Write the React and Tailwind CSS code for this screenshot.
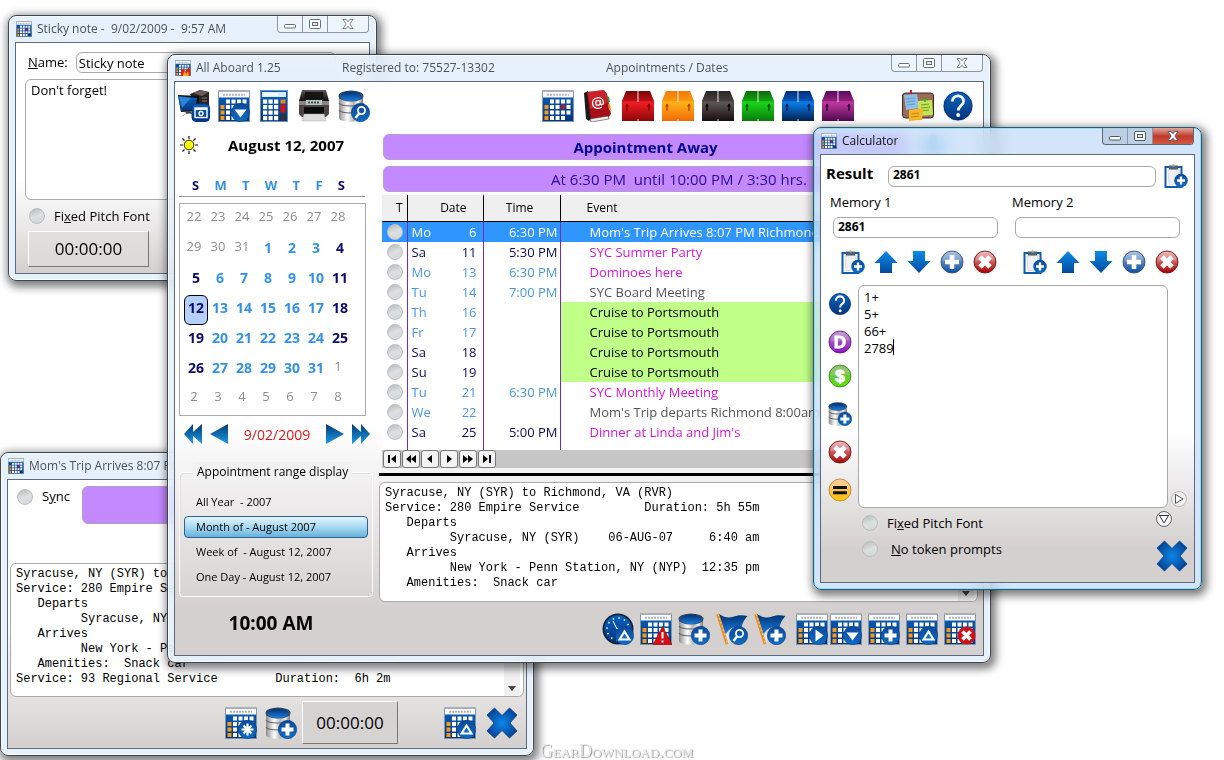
import React from "react";

const cx = (...parts) => parts.filter(Boolean).join(" ");

/* ---------- shared gradients for the icon drawings ---------- */

const GRADS = [
  ["gBlue", "#0a63c0", "#03357c"],
  ["gBadge", "#0a4a9c", "#0f6cc4"],
  ["gDeep", "#003070", "#1b7fe0"],
  ["gArrow", "#0b8ae8", "#034a9e"],
  ["gNav", "#033a70", "#1d9bea"],
  ["gMetalDark", "#5a5a5a", "#0c0c0c"],
  ["gRed", "#e8b0b0", "#a80000"],
  ["gSteel", "#9fb6dc", "#0b4fa0"],
  ["gPurple", "#b08cc8", "#8a12b8"],
  ["gGreen", "#7fae62", "#5ae010"],
  ["gOrange", "#ffc08a", "#ffc400"],
];

function SharedDefs() {
  return (
    <svg width="0" height="0" className="absolute" aria-hidden="true">
      <defs>
        {GRADS.map(([id, a, b]) => (
          <linearGradient key={id} id={id} x1="0" y1="0" x2="0" y2="1">
            <stop offset="0" stopColor={a} />
            <stop offset="1" stopColor={b} />
          </linearGradient>
        ))}
        <linearGradient id="gMetal" x1="0" y1="0" x2="1" y2="0">
          <stop offset="0" stopColor="#8d8d8d" />
          <stop offset="0.35" stopColor="#ffffff" />
          <stop offset="0.6" stopColor="#b8b8b8" />
          <stop offset="0.8" stopColor="#f2f2f2" />
          <stop offset="1" stopColor="#777777" />
        </linearGradient>
        <radialGradient id="gCross">
          <stop offset="0" stopColor="#0c86ea" />
          <stop offset="1" stopColor="#07499a" />
        </radialGradient>
      </defs>
    </svg>
  );
}

const Svg = ({ box = 32, size = "size-8", children }) => (
  <svg viewBox={`0 0 ${box} ${box}`} className={cx("block shrink-0", size)} aria-hidden="true">
    {children}
  </svg>
);

/* ---------- badge glyphs, centred on 0,0 ---------- */

const GLYPHS = {
  plus: <path d="M-2-6h4v4h4v4h-4v4h-4v-4h-4v-4h4z" fill="#fff" />,
  down: <path d="M-6-3H6L0 5z" fill="#fff" />,
  right: <path d="M-3-6 5 0-3 6z" fill="#fff" />,
  up: <path d="M-5 4 0-4 5 4z" fill="#1a6fc4" stroke="#fff" strokeWidth="2" />,
  find: (
    <g fill="none" stroke="#fff">
      <circle cx="1" cy="-2" r="3.6" strokeWidth="1.8" />
      <path d="M-1.5 1-5 5.500" strokeWidth="2.4" />
    </g>
  ),
  star: <path d="M0-6V6M-6 0H6M-4-4 4 4M4-4-4 4" stroke="#fff" strokeWidth="2.200" />,
};

const Badge = ({ glyph, x = 22.5, y = 22.5 }) => (
  <g transform={`translate(${x} ${y})`}>
    <circle r="9.200" fill="url(#gBadge)" stroke="#0a3c7c" strokeWidth="0.600" />
    {GLYPHS[glyph]}
  </g>
);

const CELL_X = [2.5, 8, 13.5, 19, 24.5];
const CELL_Y = [9.5, 15, 20.5, 26];

function CalendarIcon({ badge, today, flame, size }) {
  return (
    <Svg size={size}>
      <rect x="0.500" y="0.500" width="31" height="31" fill="url(#gBlue)" stroke="#7f95ae" />
      <rect x="1" y="1" width="30" height="6.500" fill="#fafafa" />
      <path d="M0 1h32" stroke="#a9b0b8" strokeWidth="2" />
      <path d="M5 4.700h22" stroke="#b4b4b4" strokeWidth="2" strokeDasharray="2 1" />
      {CELL_Y.map((y, r) =>
        CELL_X.map((x, c) => {
          if (r === 0 && c === 0) return null;
          if (today && r === 3 && c === 4) return null;
          const fill =
            c === 0 ? "#f49a18" : today && r === 1 && c === 3 ? "#d01020" : "#ffffff";
          return <rect key={`${r}-${c}`} x={x} y={y} width="4" height="4" fill={fill} />;
        })
      )}
      {flame && (
        <g>
          <path d="M12 32c-2-7 2-10 4-16 3 3 3 5 4 8 3-4 5-7 8-10 2 6 4 11 2 18z" fill="#d8260c" />
          <path d="M16 32c0-5 2-7 3-9 2 2 3 3 4 5l3-5c2 4 2 6 1 9z" fill="#ffa51c" />
        </g>
      )}
      {badge === "alert" && (
        <g>
          <path d="M22.500 13.500 32 31.500H13z" fill="#d40e14" stroke="#a00" strokeWidth="0.600" />
          <path d="M22.500 19v6.500M22.500 27.500v2" stroke="#fff" strokeWidth="2" />
        </g>
      )}
      {badge === "remove" && (
        <g transform="translate(22.500 22.500)">
          <circle r="9" fill="#d01018" />
          <path d="M-4-4 4 4M4-4-4 4" stroke="#fff" strokeWidth="3.800" />
        </g>
      )}
      {badge && GLYPHS[badge] && <Badge glyph={badge} />}
    </Svg>
  );
}

const CalcIcon = () => (
  <Svg>
    <rect x="2.500" y="0.500" width="27" height="31" fill="url(#gBlue)" stroke="#6f8fb5" />
    <rect x="4" y="2" width="24" height="5" fill="#d9ebfa" />
    <path d="M6 4.500h14" stroke="#fff" strokeWidth="2" />
    {CELL_Y.map((y) =>
      [5, 10.5, 16].map((x) => (
        <rect key={`${x}-${y}`} x={x} y={y} width="4.200" height="4.200" fill="#fff" />
      ))
    )}
    <rect x="22.500" y="9.500" width="5" height="4" fill="#e78a1c" />
    <rect x="22.500" y="14.500" width="5" height="8" fill="#d31212" />
    <rect x="22.500" y="24" width="5" height="6" fill="#333" />
  </Svg>
);

const DatabaseIcon = ({ badge, size }) => (
  <Svg size={size}>
    <path d="M1 6v22c0 5 24 5 24 0V6z" fill="url(#gMetal)" />
    <path d="M1 13c2 4 22 4 24 0M1 20c2 4 22 4 24 0" fill="none" stroke="#666" strokeWidth="1.200" />
    <ellipse cx="13" cy="6" rx="12.500" ry="5.600" fill="#3c4654" />
    <ellipse cx="13" cy="6.300" rx="11.200" ry="4.800" fill="url(#gDeep)" />
    <Badge glyph={badge} />
  </Svg>
);

const ComputerIcon = () => (
  <Svg>
    <path d="M12 4 22 0l9 2v18l-9 4z" fill="#2b2322" />
    <path d="m22 0 9 2-7 4-9-3z" fill="#6c5a55" />
    <path d="M24 8h5M24 11h5" stroke="#8a7a76" />
    <path d="m0 5 21 1v15L3 22z" fill="#111" />
    <path d="m0 6 19 2-2 12-14 1z" fill="url(#gBlue)" />
    <path d="m1 7 12 1L4 18z" fill="#45a5f0" opacity="0.600" />
    <path d="M3 27c4-4 8-4 12-3l-3-3H7l1 3z" fill="#444" />
    <rect x="14" y="14" width="17.500" height="17.500" rx="4" fill="url(#gBlue)" stroke="#063a80" />
    <rect x="17" y="18" width="12" height="9.500" fill="none" stroke="#fff" strokeWidth="1.400" />
    <path d="M17 19h12" stroke="#fff" strokeWidth="2" />
    <circle cx="23" cy="23.500" r="2" fill="none" stroke="#fff" strokeWidth="1.400" />
  </Svg>
);

const PrinterIcon = () => (
  <Svg>
    <path d="M4 0h24l3 11H1z" fill="url(#gMetalDark)" />
    <path d="M7 2h18l1 8H6z" fill="#151515" />
    <path d="M1 11h30v13l-3 3H4l-3-3z" fill="#4a4340" />
    <path d="M1 11h30v4H1z" fill="#8c8683" />
    <path d="M8 10h16v5H8z" fill="#b9c4c0" />
    <path d="M10 12.500h12" stroke="#3a5a50" strokeWidth="2" strokeDasharray="2 1" />
    <path d="M6 17h20v7H6z" fill="#0b0b0b" />
    <path d="M6 24h20l2 7H4z" fill="#dedede" stroke="#aaa" strokeWidth="0.500" />
  </Svg>
);

const AddressBookIcon = () => (
  <Svg>
    <path d="M2 3 6 1l5 26-4 4-3-2z" fill="#1b1b1b" />
    <path d="m5 2 17-2 3 4 4 20-3 4-17 2z" fill="#a80e18" />
    <path d="M6 2 22 0l3 5 1 8-18 6z" fill="#e8323a" opacity="0.550" />
    <path d="m8 29 18-3 1 3-18 3z" fill="#eee" stroke="#444" strokeWidth="0.600" />
    <path d="m25 6 2 1 1 5-2 0z" fill="#2c9a2c" />
    <path d="m26 14 2 0 1 6-2 0z" fill="#f09020" />
    <g fill="none" stroke="#fff" strokeWidth="1.300" transform="rotate(-8 16 13)">
      <circle cx="16" cy="13" r="2.300" />
      <path d="M18.500 10.500v3.500c0 2 3 1.500 3-1 0-7-11-7-11 0 0 5 5 6.500 8.500 4.500" />
    </g>
  </Svg>
);

const CRATES = [
  ["red", "#7a0505", "#f01c22", "#8a0808", "#7a0000"],
  ["orange", "#f47a08", "#ffb018", "#f06a08", "#c03c00"],
  ["black", "#2b2626", "#5c5454", "#180c0e", "#000000"],
  ["green", "#0d6a0a", "#18d418", "#0a7a0c", "#064806"],
  ["blue", "#022f78", "#0a7ae6", "#04204e", "#001a4a"],
  ["purple", "#5c0a5c", "#c0369e", "#4e0a4e", "#2a0030"],
];

const CrateIcon = ({ name, top, mid, low, mark }) => (
  <Svg>
    <defs>
      <linearGradient id={`crate-${name}`} x1="0" y1="0" x2="0" y2="1">
        <stop offset="0" stopColor={top} />
        <stop offset="0.400" stopColor={mid} />
        <stop offset="1" stopColor={low} />
      </linearGradient>
    </defs>
    <path d="M4 1h24l4 10v20H0V11z" fill={`url(#crate-${name})`} />
    <path d="M4 1h24l4 10H0z" fill={top} opacity="0.350" />
    <path d="M16 1v11M16 29v2.500" stroke="#eee" strokeWidth="1.200" opacity="0.800" />
    <path d="M5 14v7M27 14v7" stroke={mark} strokeWidth="1.300" />
    <path d="M3 16.500 5 13.500l2 3zM25 16.500 27 13.500l2 3z" fill={mark} />
  </Svg>
);

const NotesIcon = () => (
  <Svg>
    <rect x="0.500" y="3" width="31" height="25" rx="3" fill="#9b6a58" stroke="#3a2a24" />
    <path d="m2 5 13-1 2 14-13 2z" fill="#8fbfe8" />
    <path d="m4 9 9-1M4 12l9-1M5 15l8-1" stroke="#5b8fc0" strokeWidth="0.800" />
    <path d="m16 11 14-1 1 15-15 1z" fill="#c3e45a" />
    <path d="m19 15 8-1M19 18l9-1M19 21l8-1" stroke="#5f8c10" strokeWidth="0.800" />
    <path d="m7 20 14-2-1 12-13 1z" fill="#f6b62c" />
    <path d="m9 24 8-1M9 27l8-1" stroke="#b87a08" strokeWidth="0.800" />
    <path d="M9 0v4" stroke="#d0182a" strokeWidth="2" />
    <path d="M23 7v5M21 9h4" stroke="#4aa81c" strokeWidth="1.600" />
  </Svg>
);

const HelpIcon = ({ size }) => (
  <Svg size={size}>
    <circle cx="16" cy="16" r="15.200" fill="#cfe0f2" />
    <circle cx="16" cy="16" r="14" fill="url(#gBlue)" stroke="#052c68" />
    <path
      d="M10.500 11.500c0-7.500 11-7.500 11 0 0 4.500-5.300 4.300-5.300 9"
      fill="none"
      stroke="#fff"
      strokeWidth="2.800"
    />
    <circle cx="16.200" cy="25" r="2" fill="#fff" />
  </Svg>
);

const ClockIcon = () => (
  <Svg>
    <circle cx="16" cy="16" r="15.500" fill="#0f2238" />
    <circle cx="16" cy="16" r="13.800" fill="url(#gBlue)" />
    <circle cx="16" cy="16" r="11" fill="none" stroke="#fff" strokeWidth="1.600" strokeDasharray="1.400 4.360" />
    <path d="m11 8 4 8h7" fill="none" stroke="#fff" strokeWidth="1" />
    <Badge glyph="up" />
  </Svg>
);

const FlagIcon = ({ badge }) => (
  <Svg>
    <path d="M3 1c6 4 10 4 15 2.500C23 2 27 2 31.500 3 28 7 26.500 10 25.500 14c-6-1-11 0-16 7z" fill="url(#gDeep)" />
    <path d="M10 22c3-5 7-7 12-7l-6 6-4 9z" fill="#e4edf8" opacity="0.900" />
    <path d="m1.500 1 9.500 30" stroke="#e88a18" strokeWidth="2.600" />
    <path d="m2 1 9.500 30" stroke="#ffd890" strokeWidth="0.900" strokeDasharray="2 2" />
    <Badge glyph={badge} />
  </Svg>
);

const CrossIcon = () => (
  <Svg>
    <path
      d="M8.500 1l7.500 7.500L23.500 1l7.500 7-7 8 7 8-7.500 7-7.500-7.500L8.500 31 1 24l7-8-7-8z"
      fill="url(#gCross)"
      stroke="#083c80"
      strokeWidth="0.800"
    />
  </Svg>
);

const SunIcon = () => (
  <Svg box={18} size="size-[18px]">
    <path
      d="M9 0v3M9 15v3M0 9h3M15 9h3M2.500 2.500l2 2M13.500 13.500l2 2M15.500 2.500l-2 2M4.500 13.500l-2 2"
      stroke="#111"
      strokeWidth="1.200"
    />
    <circle cx="9" cy="9" r="4.800" fill="#ffff10" stroke="#332a00" />
  </Svg>
);

const ClipboardIcon = () => (
  <Svg box={24} size="size-6">
    <rect x="1.500" y="3" width="16" height="20" fill="#fff" stroke="#0f5cac" strokeWidth="2" />
    <path d="m4 6 11-1v14L5 21z" fill="#eef0f3" stroke="#c8ccd2" strokeWidth="0.600" />
    <rect x="5" y="1.500" width="9" height="4" fill="#53616f" />
    <circle cx="9.500" cy="1.500" r="1.300" fill="#9aa" />
    <circle cx="17" cy="16.500" r="6.800" fill="url(#gBadge)" />
    <path d="M17 12.500v8M13 16.500h8" stroke="#fff" strokeWidth="2.400" />
  </Svg>
);

const ArrowIcon = ({ down }) => (
  <Svg box={24} size="size-6">
    <path
      d={down ? "M6 1h12v10h5.500L12 23 .5 11H6z" : "M6 23h12V13h5.500L12 1 .5 13H6z"}
      fill="url(#gArrow)"
    />
  </Svg>
);

const RoundIcon = ({ fill, edge, glyph }) => (
  <Svg box={24} size="size-6">
    <circle cx="12" cy="12" r="11" fill={`url(#${fill})`} stroke={edge} strokeWidth="0.900" />
    <path d="M2.500 11a9.500 9.500 0 0 1 19 0c-5-2-13 1-19 0z" fill="#fff" opacity="0.180" />
    {glyph === "plus" && <path d="M12 5v14M5 12h14" stroke="#fff" strokeWidth="4.600" />}
    {glyph === "cross" && <path d="m7 7 10 10M17 7 7 17" stroke="#fff" strokeWidth="5" />}
    {glyph === "equals" && <path d="M5 9.500h14M5 14.800h14" stroke="#111" strokeWidth="3" />}
    {glyph.length === 1 && (
      <text
        x="12"
        y="18"
        textAnchor="middle"
        fontFamily="Liberation Sans, sans-serif"
        fontWeight="700"
        fontSize="17"
        stroke="#fff"
        strokeWidth="0.800"
        fill="#fff"
      >
        {glyph}
      </text>
    )}
  </Svg>
);

/* ---------- small controls ---------- */

const IconButton = ({ label, children }) => (
  <button type="button" aria-label={label} className="block shrink-0">
    {children}
  </button>
);

const Orb = (props) => (
  <input
    type="checkbox"
    className="block size-4 shrink-0 appearance-none rounded-full border border-[#bcbfbf] bg-linear-160 from-[#b4b8b8] via-[#dde0e0] to-[#d2d5d5]"
    {...props}
  />
);

const CaptionButtons = ({ active }) => {
  const stroke = active ? "#4d5a6c" : "#66707c";
  return (
    <div
      className={cx(
        "mr-[7px] flex h-[17px] self-start overflow-hidden rounded-b border border-t-0",
        active ? "border-[#5b6878] bg-[#b3c6dc]/70" : "border-[#8c96a4] bg-white/20"
      )}
    >
      <button type="button" aria-label="Minimize" className="flex w-[25px] items-center justify-center border-r border-[#8c96a4]">
        <svg viewBox="0 0 12 10" className="h-[10px] w-3" aria-hidden="true">
          <rect x="0.500" y="5.500" width="11" height="3.500" rx="1" fill="#fff" stroke={stroke} />
        </svg>
      </button>
      <button type="button" aria-label="Maximize" className="flex w-[25px] items-center justify-center border-r border-[#8c96a4]">
        <svg viewBox="0 0 12 10" className="h-[10px] w-3" aria-hidden="true">
          <rect x="0.500" y="0.500" width="11" height="9" rx="1" fill="#fff" stroke={stroke} />
          <rect x="3.500" y="3.500" width="5" height="3" fill="#dfe8f2" stroke={stroke} />
        </svg>
      </button>
      <button
        type="button"
        aria-label="Close"
        className={cx(
          "flex w-10 items-center justify-center",
          active && "bg-linear-to-b from-[#dba79f] via-[#c0392b] to-[#d4583f]"
        )}
      >
        <svg viewBox="0 0 12 10" className="h-[10px] w-3" aria-hidden="true">
          <path
            d="M1 .5h3.200L6 2.800 7.800.5H11L7.800 5 11 9.500H7.800L6 7.200 4.200 9.500H1L4.200 5z"
            fill="#fff"
            stroke={stroke}
            strokeWidth="0.900"
          />
        </svg>
      </button>
    </div>
  );
};

function Window({ place, title, label, active, flame, body, children }) {
  return (
    <section
      aria-label={label}
      className={cx(
        "absolute flex flex-col rounded-lg border shadow-[2px_3px_9px_3px_rgba(0,0,0,0.5)] backdrop-blur-sm",
        active
          ? "border-[#1f5f78] bg-[#c3dcf8]/75 inset-ring inset-ring-[#7fd8ee]/70"
          : "border-[#3d4652] bg-[#e3eefb]/85 inset-ring inset-ring-white/70",
        place
      )}
    >
      <header
        className={cx(
          "flex h-[26px] shrink-0 items-center pl-[7px] text-[12px]",
          active ? "text-[#111]" : "text-[#4c5258]"
        )}
      >
        <CalendarIcon today={!flame} flame={flame} size="size-4" />
        <div className="min-w-0 grow overflow-hidden pl-[5px] whitespace-pre">{title}</div>
        <CaptionButtons active={active} />
      </header>
      <div
        className={cx(
          "mx-[6px] mb-[6px] min-h-0 grow border border-[#5c6a7c] bg-linear-to-b from-white to-[#d4d0d0]",
          body
        )}
      >
        {children}
      </div>
    </section>
  );
}

const BOX = "block rounded-md border border-[#a9a9a9] bg-white text-black outline-none resize-none";
const MONO = "font-['Liberation_Mono',monospace] text-[12px] leading-[15px] whitespace-pre overflow-hidden";

const TRIP = `Syracuse, NY (SYR) to Richmond, VA (RVR)
Service: 280 Empire Service         Duration: 5h 55m
   Departs
         Syracuse, NY (SYR)    06-AUG-07     6:40 am
   Arrives
         New York - Penn Station, NY (NYP)  12:35 pm
   Amenities:  Snack car`;

const TRIP_LONG = `${TRIP}
Service: 93 Regional Service        Duration:  6h 2m`;

const ScrollStrip = () => (
  <div className="absolute top-px right-1 bottom-px flex w-4 items-end justify-center bg-[#f1f1f1] pb-[5px]">
    <svg viewBox="0 0 8 5" className="h-[5px] w-2" aria-hidden="true">
      <path d="M0 0h8L4 5z" fill="#444" />
    </svg>
  </div>
);

/* ---------- windows ---------- */

function StickyNote() {
  return (
    <Window
      place="left-[8px] top-[15px] w-[369px] h-[266px]"
      label="Sticky note"
      title="Sticky note -  9/02/2009 -  9:57 AM"
      body="from-60% px-[9px] pt-[9px]"
    >
      <div className="flex items-center gap-2 pl-[3px]">
        <label htmlFor="note-name" className="text-[13px]">
          <u>N</u>ame:
        </label>
        <input
          id="note-name"
          defaultValue="Sticky note"
          className={cx(BOX, "h-[21px] w-[260px] px-[2px] text-[13px]")}
        />
      </div>
      <textarea
        aria-label="Note text"
        defaultValue="Don't forget!"
        className={cx(BOX, "mt-[6px] h-[121px] w-full px-[5px] py-px text-[13px] leading-[18px]")}
      />
      <label className="mt-[7px] flex items-center gap-[9px] pl-1 text-[13px] leading-[18px]">
        <Orb />
        <span>
          Fi<u>x</u>ed Pitch Font
        </span>
      </label>
      <button
        type="button"
        className="mt-[6px] ml-[3px] h-9 w-[121px] border border-t-white border-l-white border-r-[#777] border-b-[#777] bg-[#dedbdb]/70 text-[17px]"
      >
        00:00:00
      </button>
    </Window>
  );
}

function TripWindow() {
  return (
    <Window
      place="left-0 top-[452px] w-[534px] h-[304px]"
      label="Trip details"
      title="Mom's Trip Arrives 8:07 PM"
      body="from-50% flex flex-col px-[2px] pt-[6px]"
    >
      <div className="flex items-start">
        <label className="flex w-[72px] shrink-0 items-center gap-[9px] pt-px pl-[7px] text-[13px]">
          <Orb />
          <span>
            S<u>y</u>nc
          </span>
        </label>
        <div className="h-[38px] w-[400px] rounded-md border border-[#b0a0c8] bg-[#c488ff]" />
      </div>
      <div className="relative mt-[39px]">
        <textarea
          aria-label="Trip text"
          defaultValue={TRIP_LONG}
          className={cx(BOX, MONO, "h-[134px] w-full px-[5px] py-[3px]")}
        />
        <ScrollStrip />
      </div>
      <div className="flex h-[52px] items-center pr-[6px] pl-[215px]">
        <IconButton label="New appointment">
          <CalendarIcon badge="star" />
        </IconButton>
        <div className="ml-2">
          <IconButton label="Save record">
            <DatabaseIcon badge="plus" />
          </IconButton>
        </div>
        <button
          type="button"
          className="ml-[5px] h-[43px] w-[96px] border border-t-white border-l-white border-r-[#777] border-b-[#777] bg-[#d6d3d3] text-[17px]"
        >
          00:00:00
        </button>
        <div className="ml-auto flex gap-[10px]">
          <IconButton label="Update appointment">
            <CalendarIcon badge="up" />
          </IconButton>
          <IconButton label="Close trip">
            <CrossIcon />
          </IconButton>
        </div>
      </div>
    </Window>
  );
}

const WEEKS = [
  [22, 23, 24, 25, 26, 27, 28],
  [29, 30, 31, 1, 2, 3, 4],
  [5, 6, 7, 8, 9, 10, 11],
  [12, 13, 14, 15, 16, 17, 18],
  [19, 20, 21, 22, 23, 24, 25],
  [26, 27, 28, 29, 30, 31, 1],
  [2, 3, 4, 5, 6, 7, 8],
];

const isOutside = (row, day) => (row <= 1 && day > 20) || (row >= 5 && day < 10);

const NavArrow = ({ label, double, right }) => (
  <IconButton label={label}>
    <svg viewBox="0 0 18 20" className={cx("h-5 w-[18px]", right && "-scale-x-100")} aria-hidden="true">
      {double ? (
        <path d="M9 0v8l9-8v20l-9-8v8L0 10z" fill="url(#gNav)" />
      ) : (
        <path d="M18 0v20L0 10z" fill="url(#gNav)" />
      )}
    </svg>
  </IconButton>
);

function MonthPanel() {
  const range = [
    "All Year  - 2007",
    "Month of - August 2007",
    "Week of  - August 12, 2007",
    "One Day - August 12, 2007",
  ];
  return (
    <div className="flex w-[198px] shrink-0 flex-col pl-1">
      <div className="flex h-[22px] items-center pl-px">
        <SunIcon />
        <h2 className="ml-[30px] text-[15px] font-bold whitespace-nowrap">August 12, 2007</h2>
      </div>
      <div className="mt-5 mr-2 flex h-[21px] items-center justify-between border-b border-[#999] pr-5 pl-[13px] text-[13px] font-bold">
        {["S", "M", "T", "W", "T", "F", "S"].map((d, i) => (
          <span key={i} className={i % 6 === 0 ? "text-[#0a0a6e]" : "text-[#3392e8]"}>
            {d}
          </span>
        ))}
      </div>
      <div className="mt-[6px] mr-[7px] flex flex-col border border-[#aaa] pt-px pl-1">
        {WEEKS.map((week, row) => (
          <div key={row} className="flex">
            {week.map((day, col) => {
              const out = isOutside(row, day);
              const chosen = row === 3 && col === 0;
              return (
                <button
                  key={col}
                  type="button"
                  className={cx(
                    "flex h-[30px] w-6 items-center justify-center pb-[6px]",
                    out ? "pr-1 text-[13px] text-[#8e8e8e]" : "text-[14px] font-bold",
                    !out && (col % 6 === 0 ? "text-[#0a0a6e]" : "text-[#3392e8]"),
                    chosen && "rounded-md border border-black bg-[#b5d0fb]"
                  )}
                >
                  {day}
                </button>
              );
            })}
          </div>
        ))}
      </div>
      <div className="mt-2 flex h-5 items-center justify-between pr-[3px] pl-[5px]">
        <div className="flex gap-2">
          <NavArrow label="Previous year" double />
          <NavArrow label="Previous month" />
        </div>
        <span className="text-[14px] text-[#dd1a1a]">9/02/2009</span>
        <div className="flex gap-2">
          <NavArrow label="Next month" right />
          <NavArrow label="Next year" double right />
        </div>
      </div>
      <fieldset className="mt-[18px] rounded border border-white/90 px-1 pb-2 shadow-[inset_1px_1px_0_#ddd]">
        <legend className="ml-[9px] bg-[#f1f1f1] px-1 text-[12px] leading-5 whitespace-nowrap">
          Appointment range display
        </legend>
        <div className="mt-[9px] flex flex-col gap-[3px]">
          {range.map((item, i) => (
            <button
              key={item}
              type="button"
              className={cx(
                "h-[22px] rounded-sm border px-[11px] text-left text-[11px] whitespace-pre",
                i === 1
                  ? "border-[#2c628b] bg-linear-to-b from-[#e3f4fc] via-[#a8d9f1] to-[#66b1dc]"
                  : "border-transparent"
              )}
            >
              {item}
            </button>
          ))}
        </div>
      </fieldset>
      <div className="mt-3 pr-[10px] text-center text-[19px] leading-7 font-bold">10:00 AM</div>
    </div>
  );
}

const EVENTS = [
  ["Mo", 6, "6:30 PM", "Mom's Trip Arrives 8:07 PM Richmond", "sel"],
  ["Sa", 11, "5:30 PM", "SYC Summer Party", "pink"],
  ["Mo", 13, "6:30 PM", "Dominoes here", "pink"],
  ["Tu", 14, "7:00 PM", "SYC Board Meeting", "gray"],
  ["Th", 16, "", "Cruise to Portsmouth", "green"],
  ["Fr", 17, "", "Cruise to Portsmouth", "green"],
  ["Sa", 18, "", "Cruise to Portsmouth", "green"],
  ["Su", 19, "", "Cruise to Portsmouth", "green"],
  ["Tu", 21, "6:30 PM", "SYC Monthly Meeting", "pink"],
  ["We", 22, "", "Mom's Trip departs Richmond 8:00am", "gray"],
  ["Sa", 25, "5:00 PM", "Dinner at Linda and Jim's", "pink"],
];

const EVENT_STYLE = {
  sel: "text-white",
  pink: "text-[#d416d4]",
  gray: "text-[#555]",
  green: "bg-[#c0ff88] text-black",
};

const RECORD_NAV = [
  ["First", "M2 2h2v8H2zM10 2v8L5 6z"],
  ["Back page", "M6 2v8L1 6zM11 2v8L6 6z"],
  ["Back", "M8 2v8L3 6z"],
  ["Forward", "M4 2v8l5-4z"],
  ["Forward page", "M1 2v8l5-4zM6 2v8l5-4z"],
  ["Last", "M2 2v8l5-4zM8 2h2v8H8z"],
];

function EventPanel() {
  const rule = "border-r border-[#7a2bb0]";
  return (
    <div className="flex min-w-0 grow flex-col pr-[5px] pl-[6px]">
      <div className="mr-[70px] ml-[4px] h-[26px] rounded-md border border-[#b79ad6] bg-[#c488ff] text-center text-[15px] leading-6 font-bold text-[#000090]">
        Appointment Away
      </div>
      <div className="mt-[6px] mr-[70px] ml-[4px] h-[26px] rounded-md border border-[#b79ad6] bg-[#c488ff] pl-[67px] text-center text-[15px] leading-6 whitespace-pre text-[#2a0a9a]">
        At 6:30 PM  until 10:00 PM / 3:30 hrs.
      </div>
      <div className="mt-[3px] ml-[3px] h-[255px] bg-white">
        <table className="w-full table-fixed border-collapse text-[13px]">
          <colgroup>
            <col className="w-[25px]" />
            <col className="w-[34px]" />
            <col className="w-[42px]" />
            <col className="w-[77px]" />
            <col />
          </colgroup>
          <thead>
            <tr className="h-[26px] border-b border-black bg-[#efefef] text-[12px]">
              <th className="border-r border-black p-0 pr-1 text-right font-normal">T</th>
              <th colSpan={2} className="border-r border-black p-0 pr-4 text-right font-normal">Date</th>
              <th className="border-r border-black p-0 pr-1 text-center font-normal">Time</th>
              <th className="p-0 pl-[26px] text-left font-normal">Event</th>
            </tr>
          </thead>
          <tbody>
            {EVENTS.map(([dow, day, time, text, kind]) => {
              const tone =
                kind === "sel" ? "text-white" : dow[0] === "S" ? "text-[#0a0a5e]" : "text-[#4a98e4]";
              return (
                <tr key={day} className={cx("h-5", kind === "sel" && "bg-[#2f95ff]")}>
                  <td className={cx("p-0 pl-[5px]", rule)}>
                    <Orb aria-label={`Select August ${day}`} />
                  </td>
                  <td className={cx("p-0 pl-1 leading-5", tone)}>{dow}</td>
                  <td className={cx("p-0 pr-[6px] text-right leading-5", rule, tone)}>{day}</td>
                  <td className={cx("p-0 pr-[2px] text-right leading-5", rule, tone)}>{time}</td>
                  <td className={cx("overflow-hidden p-0 pl-[29px] leading-5 whitespace-nowrap", EVENT_STYLE[kind])}>
                    {text}
                  </td>
                </tr>
              );
            })}
            <tr className="h-2">
              <td className={rule} />
              <td />
              <td className={rule} />
              <td className={rule} />
              <td />
            </tr>
          </tbody>
        </table>
      </div>
      <div className="ml-[3px] flex h-[18px] gap-px bg-[#c6c6c6] pl-px">
        {RECORD_NAV.map(([label, d]) => (
          <button
            key={label}
            type="button"
            aria-label={label}
            className="flex h-[18px] w-[18px] items-center justify-center rounded-[3px] border border-[#777] bg-[#f3f3f3]"
          >
            <svg viewBox="0 0 12 12" className="size-3" aria-hidden="true">
              <path d={d} fill="#000" />
            </svg>
          </button>
        ))}
      </div>
      <div className="mt-[5px] h-[3px] bg-black" />
      <div className="relative mt-[6px]">
        <textarea
          aria-label="Appointment details"
          defaultValue={TRIP}
          className={cx(BOX, MONO, "h-[120px] w-full px-[5px] py-[3px]")}
        />
        <ScrollStrip />
      </div>
      <div className="mt-[11px] flex justify-end gap-[6px] pr-[2px]">
        <IconButton label="Set alarm"><ClockIcon /></IconButton>
        <IconButton label="Alerts"><CalendarIcon badge="alert" /></IconButton>
        <IconButton label="Add record"><DatabaseIcon badge="plus" /></IconButton>
        <IconButton label="Find flag"><FlagIcon badge="find" /></IconButton>
        <IconButton label="Add flag"><FlagIcon badge="plus" /></IconButton>
        <div className="ml-1 flex gap-[2px]">
          <IconButton label="Next appointment"><CalendarIcon badge="right" /></IconButton>
          <IconButton label="Appointment list"><CalendarIcon badge="down" /></IconButton>
        </div>
        <IconButton label="Add appointment"><CalendarIcon badge="plus" /></IconButton>
        <IconButton label="Change appointment"><CalendarIcon badge="up" /></IconButton>
        <IconButton label="Delete appointment"><CalendarIcon badge="remove" /></IconButton>
      </div>
    </div>
  );
}

function MainWindow() {
  return (
    <Window
      place="left-[167px] top-[54px] w-[824px] h-[609px]"
      label="All Aboard"
      flame
      title={
        <div className="grid grid-cols-[146px_264px_auto]">
          <span>All Aboard 1.25</span>
          <span>Registered to: 75527-13302</span>
          <span>Appointments / Dates</span>
        </div>
      }
      body="from-60% to-92% flex flex-col"
    >
      <div className="flex pt-2 pr-[9px] pl-[3px]">
        <div className="flex gap-2">
          <IconButton label="Screen capture"><ComputerIcon /></IconButton>
          <IconButton label="Calendar list"><CalendarIcon badge="down" /></IconButton>
          <IconButton label="Calculator"><CalcIcon /></IconButton>
          <IconButton label="Print"><PrinterIcon /></IconButton>
          <IconButton label="Search database"><DatabaseIcon badge="find" /></IconButton>
        </div>
        <div className="ml-auto flex gap-2">
          <IconButton label="Calendar"><CalendarIcon today /></IconButton>
          <IconButton label="Address book"><AddressBookIcon /></IconButton>
          {CRATES.map(([name, top, mid, low, mark]) => (
            <IconButton key={name} label={`${name} category`}>
              <CrateIcon name={name} top={top} mid={mid} low={low} mark={mark} />
            </IconButton>
          ))}
        </div>
        <div className="ml-12 flex gap-2">
          <IconButton label="Notes"><NotesIcon /></IconButton>
          <IconButton label="Help"><HelpIcon /></IconButton>
        </div>
      </div>
      <div className="relative flex min-h-0 grow pt-[12px]">
        <MonthPanel />
        <EventPanel />
        <div className="absolute top-3 right-[38px]">
          <IconButton label="Add">
            <Svg box={24} size="size-6">
              <path d="M8 1h8v7h7v8h-7v7H8v-7H1V8h7z" fill="#1f86d6" />
            </Svg>
          </IconButton>
        </div>
      </div>
    </Window>
  );
}

const MemoryBlock = ({ n, value }) => (
  <div className="w-[168px]">
    <label htmlFor={`memory-${n}`} className="block text-[13px] leading-[18px]">
      Memory {n}
    </label>
    <input
      id={`memory-${n}`}
      defaultValue={value}
      className={cx(BOX, "mt-[6px] ml-[3px] h-[21px] w-[165px] px-1 pb-[3px] text-[12px] font-bold")}
    />
    <div className="mt-[12px] ml-[11px] flex gap-[9px]">
      <IconButton label={`Copy memory ${n}`}><ClipboardIcon /></IconButton>
      <IconButton label={`Store memory ${n}`}><ArrowIcon /></IconButton>
      <IconButton label={`Recall memory ${n}`}><ArrowIcon down /></IconButton>
      <IconButton label={`Add to memory ${n}`}><RoundIcon fill="gSteel" edge="#33507e" glyph="plus" /></IconButton>
      <IconButton label={`Clear memory ${n}`}><RoundIcon fill="gRed" edge="#7a1010" glyph="cross" /></IconButton>
    </div>
  </div>
);

function Calculator() {
  return (
    <Window
      place="left-[813px] top-[127px] w-[389px] h-[463px]"
      label="Calculator"
      title="Calculator"
      active
      body="from-65% to-92% flex flex-col pt-[8px] px-[5px]"
    >
      <div className="flex h-[26px] items-center">
        <label htmlFor="result" className="w-[62px] self-start text-[15px] leading-5 font-bold">
          Result
        </label>
        <input
          id="result"
          defaultValue="2861"
          className={cx(BOX, "h-[21px] w-[268px] px-1 pb-[3px] text-[12px] font-bold")}
        />
        <div className="ml-2">
          <IconButton label="Copy result"><ClipboardIcon /></IconButton>
        </div>
      </div>
      <div className="mt-1 flex gap-[14px] pl-1">
        <MemoryBlock n={1} value="2861" />
        <MemoryBlock n={2} value="" />
      </div>
      <div className="mt-[11px] flex">
        <div className="mt-[7px] flex w-[32px] flex-col items-start gap-[14px] pl-[2px]">
          <IconButton label="Calculator help"><HelpIcon size="size-6" /></IconButton>
          <div className="flex flex-col gap-[10px]">
            <IconButton label="Date"><RoundIcon fill="gPurple" edge="#5f1c86" glyph="D" /></IconButton>
            <IconButton label="Currency"><RoundIcon fill="gGreen" edge="#3c8a1c" glyph="$" /></IconButton>
          </div>
          <IconButton label="Save tape"><DatabaseIcon badge="plus" size="size-6" /></IconButton>
          <IconButton label="Clear tape"><RoundIcon fill="gRed" edge="#7a1010" glyph="cross" /></IconButton>
          <IconButton label="Calculate"><RoundIcon fill="gOrange" edge="#b98a3c" glyph="equals" /></IconButton>
        </div>
        <div className="relative">
          <textarea
            aria-label="Tape"
            defaultValue={"1+\n5+\n66+\n2789"}
            className={cx(BOX, "h-[223px] w-[310px] px-[5px] py-[3px] text-[13px] leading-[17px]")}
          />
          <span className="absolute top-[54px] left-[35px] h-4 w-px bg-black" />
        </div>
        <div className="flex items-end pb-[1px] pl-[3px]">
          <button type="button" aria-label="Widen" className="flex size-4 items-center justify-center rounded-full border border-[#bbb] bg-[#eee]">
            <svg viewBox="0 0 10 10" className="size-[10px]" aria-hidden="true">
              <path d="M1.500 .5v9L9 5z" fill="#fff" stroke="#555" />
            </svg>
          </button>
        </div>
      </div>
      <div className="flex justify-between pr-px pl-[36px]">
        <div className="mt-[6px] flex flex-col gap-2 text-[13px] leading-[18px]">
          <label className="flex items-center gap-[9px]">
            <Orb />
            <span>
              Fi<u>x</u>ed Pitch Font
            </span>
          </label>
          <label className="flex items-center gap-[13px]">
            <Orb />
            <span>
              <u>N</u>o token prompts
            </span>
          </label>
        </div>
        <div className="flex flex-col gap-[13px] pt-[3px]">
          <button type="button" aria-label="Heighten" className="flex size-4 items-center justify-center rounded-full border border-[#666] bg-[#f4f4f4]">
            <svg viewBox="0 0 10 10" className="size-[10px]" aria-hidden="true">
              <path d="M.5 1.500h9L5 9z" fill="#fff" stroke="#333" />
            </svg>
          </button>
          <IconButton label="Close calculator"><CrossIcon /></IconButton>
        </div>
      </div>
    </Window>
  );
}

export default function App() {
  return (
    <main className="relative min-h-screen overflow-hidden bg-white font-['Open_Sans',sans-serif] text-black">
      <SharedDefs />
      <StickyNote />
      <TripWindow />
      <MainWindow />
      <Calculator />
      <p className="absolute top-[741px] left-[540px] font-['Liberation_Serif',serif] text-[18px] leading-5 text-[#e6e6e6] [font-variant:small-caps] text-shadow-[1px_1px_1px_#999]">
        GearDownload.com
      </p>
    </main>
  );
}
